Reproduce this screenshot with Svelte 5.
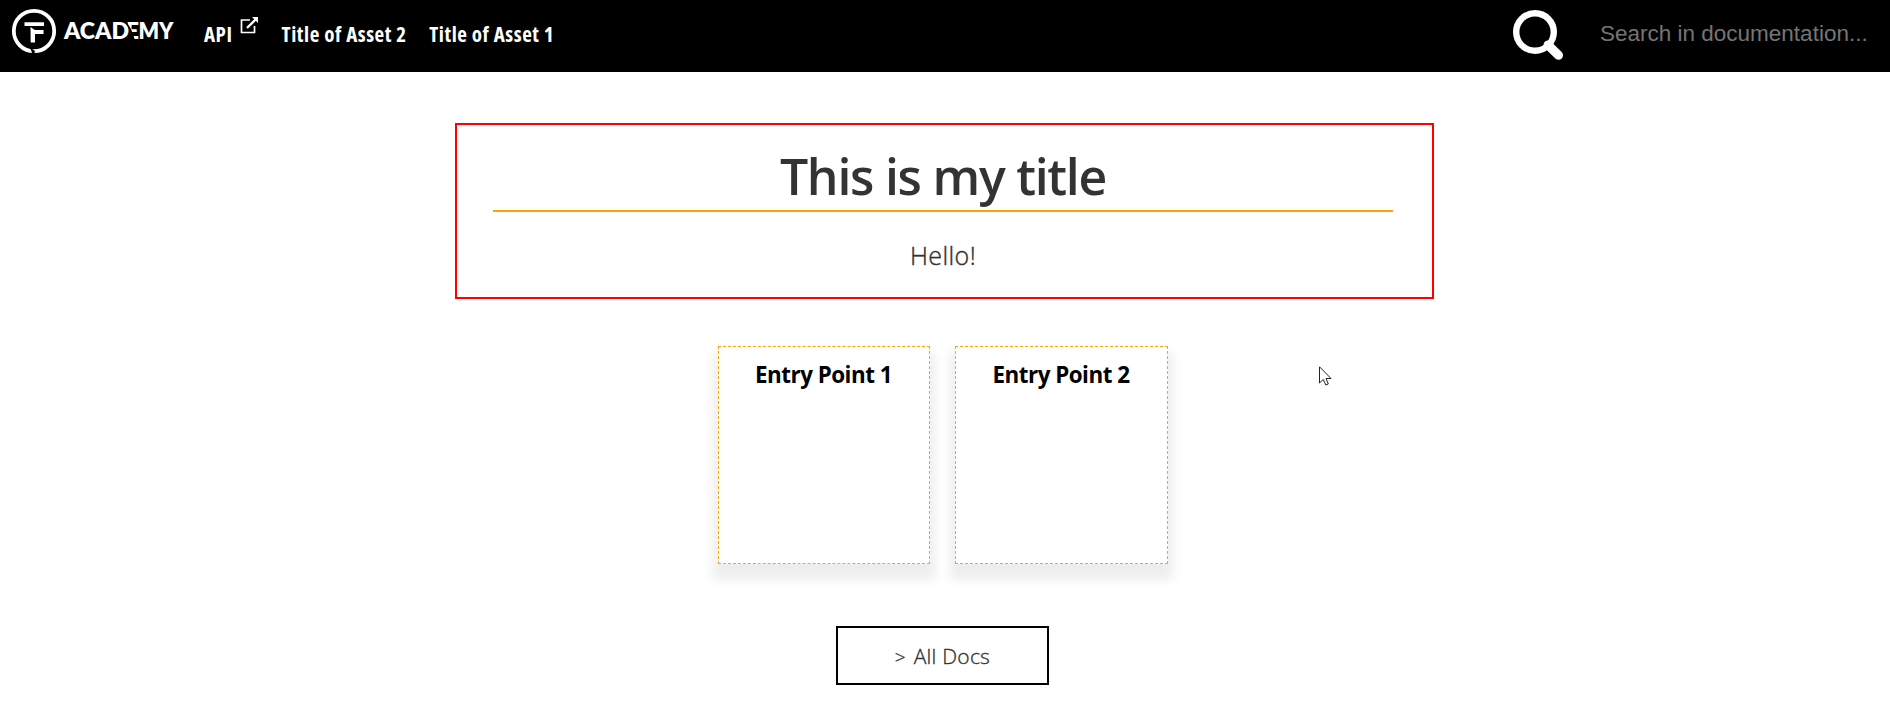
<script>
  const nav = ['Title of Asset 2', 'Title of Asset 1'];
  const entries = ['Entry Point 1', 'Entry Point 2'];
</script>

<header>
  <svg class="logo" width="180" height="72" viewBox="0 0 180 72" aria-label="TF Academy">
    <circle cx="34" cy="31" r="20.2" fill="none" stroke="#fff" stroke-width="3.8" />
    <path d="M30 47.500L32.500 54H34L35 51z" fill="#000" />
    <path d="M24.500 22.300H44V26H24.500zM30.500 27L34.800 30H43.500V34H35V42.500H30.700z" fill="#fff" />
    <text x="126" y="39" textLength="13" lengthAdjust="spacingAndGlyphs">E</text>
    <path d="M123 21H126L131 29L135 40H123z" fill="#000" />
    <text x="64" y="39" textLength="65" lengthAdjust="spacingAndGlyphs">ACAD</text>
    <path d="M125.500 21L132 34" stroke="#000" stroke-width="1" />
    <text x="138.500" y="39" textLength="35" lengthAdjust="spacingAndGlyphs">MY</text>
  </svg>
  <nav>
    <a class="api" href="#api"><span>API</span>
      <svg width="19" height="18" viewBox="0 0 19 18" fill="none" stroke="#fff">
        <path d="M10 3H1.500V15.500H14.500V9" stroke-width="1.7" />
        <path d="M7 11L16 2" stroke-width="2.4" /><path d="M12 0H18V6z" fill="#fff" stroke="none" />
      </svg>
    </a>
    {#each nav as n}<a href="#asset"><span>{n}</span></a>{/each}
  </nav>
  <svg class="search" width="52" height="52" viewBox="0 0 52 52" fill="none" stroke="#fff">
    <circle cx="23" cy="22" r="18.800" stroke-width="6.400" />
    <path d="M36 35L46.500 45.300" stroke-width="9" stroke-linecap="round" />
  </svg>
  <input placeholder="Search in documentation..." aria-label="Search" />
</header>
<main>
  <section>
    <h1><span>This is my title</span></h1>
    <p>Hello!</p>
  </section>
  <div class="cards">
    {#each entries as e}<a href="#entry">{e}</a>{/each}
  </div>
  <a class="all" href="#docs"><i>&gt;</i> All Docs</a>
</main>
<svg class="cursor" width="13" height="20" viewBox="0 0 13 20">
  <path d="M.5.800V17L4.300 13.500L6.800 19L9.300 18L7 12.500H12z" fill="#fff" stroke="#223" />
</svg>

<style>
  :global(body) { margin: 0; background: #fff; overflow: hidden; }
  a { color: inherit; text-decoration: none; }
  header { height: 72px; background: #000; color: #fff; display: flex; }
  .logo { flex: none; }
  .logo text { font: 800 22.500px Lato, sans-serif; fill: #fff; }
  nav { display: flex; padding: 20px 0 0 24px; gap: 22.500px; font: 700 21px/28px "Open Sans", sans-serif; font-stretch: 75%; letter-spacing: .56px; white-space: nowrap; }
  .api { display: flex; gap: 7.500px; }
  .api svg { margin-top: -3px; }
  .search { margin: 10px 0 0 auto; }
  input { width: 290px; height: 32px; margin: 18px 0 0 36px; padding: 0; border: 0; background: none; color: #fff; font: 22.500px "Liberation Sans", sans-serif; }
  input::placeholder { color: #757575; opacity: 1; }
  main { display: flex; flex-direction: column; align-items: center; font-family: "Open Sans", sans-serif; color: #333; padding-right: 5px; }
  section { box-sizing: border-box; width: 979px; height: 176px; margin: 51px 0 0 4px; border: 2px solid #f00; padding: 0 39px 0 36px; text-align: center; }
  h1 { margin: 0; height: 85px; border-bottom: 2px solid orange; font-size: 50px; font-weight: 600; letter-spacing: -1.25px; line-height: 103px; white-space: nowrap; }
  p { margin: 0; padding-top: 21px; font-size: 25px; line-height: 44px; font-weight: 300; letter-spacing: .4px; -webkit-text-stroke: .4px #333; }
  .cards { display: flex; gap: 25px; margin-top: 47px; }
  .cards a { box-sizing: border-box; width: 212px; height: 218px; border: 1px dashed orange; padding-top: 12px; text-align: center; color: #000; font-size: 22.400px; line-height: 31px; font-weight: 700; letter-spacing: -.5px; box-shadow: 0 11px 10px 5px #00000012; }
  .cards a + a { width: 213px; }
  .all { box-sizing: border-box; width: 213px; height: 59px; margin-top: 62px; border: 2px solid #000; text-align: center; font-size: 21px; line-height: 56px; font-weight: 300; letter-spacing: .25px; -webkit-text-stroke: .35px #333; }
  .all i { font-style: normal; font-size: 19px; margin-right: 2px; }
  .cursor { position: absolute; left: 1319px; top: 366px; }
</style>
